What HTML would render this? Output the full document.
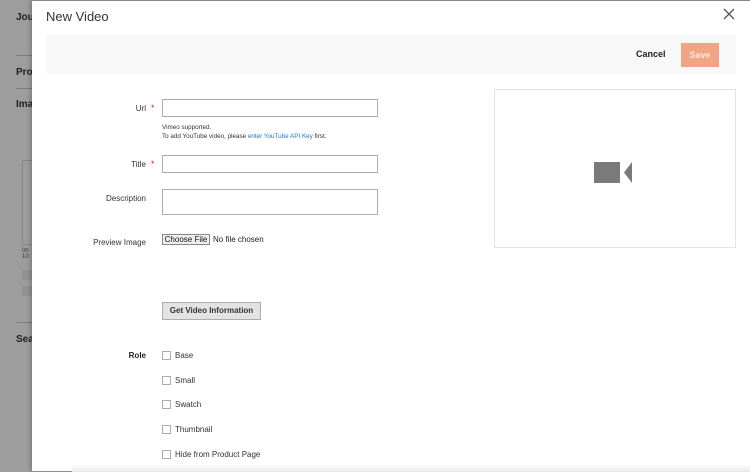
<!DOCTYPE html>
<html><head><meta charset="utf-8"><style>
*{box-sizing:border-box;margin:0;padding:0}
body{width:750px;height:471px;overflow:hidden;background:#9d9d9d;font-family:"Liberation Sans",sans-serif;position:relative;color:#303030}
.bg{position:absolute;font-weight:bold;font-size:10px;color:#222;left:16px}
.ln{position:absolute;left:16px;width:20px;height:1px;background:#7d7d7d}
.modal{position:absolute;left:32px;top:0;width:718px;height:471px;background:#fff;border-top:1px solid #888;box-shadow:-2px 0 4px rgba(0,0,0,.2)}
.abs{position:absolute}
.lbl{position:absolute;right:604px;font-size:8px;color:#333;text-align:right}
.star{position:absolute;left:119px;color:#e22626;font-size:9px}
.inp{position:absolute;left:130px;width:216px;border:1px solid #adadad;background:#fff}
.cb{position:absolute;left:130px;width:9px;height:9px;border:1px solid #adadad;background:#fff}
.cl{position:absolute;left:143px;font-size:8px;color:#333}
</style></head><body>
<div class="bg" style="top:12px">Jou</div>
<div class="ln" style="top:55px"></div>
<div class="bg" style="top:67px">Pro</div>
<div class="ln" style="top:88px"></div>
<div class="bg" style="top:99px">Ima</div>
<div class="abs" style="left:22px;top:160px;width:14px;height:85px;border:1px solid #888"></div>
<div class="abs" style="left:22px;top:248px;font-size:6px;color:#333">Im<br>10</div>
<div class="abs" style="left:22px;top:270px;width:14px;height:10px;background:#929292"></div>
<div class="abs" style="left:22px;top:286px;width:14px;height:10px;background:#929292"></div>
<div class="ln" style="top:322px"></div>
<div class="bg" style="top:334px">Sea</div>

<div class="modal">
 <div class="abs" style="left:14px;top:8px;font-size:13px;color:#333">New Video</div>
 <svg class="abs" style="left:691px;top:7px" width="12" height="12"><path d="M1 1L11 11M11 1L1 11" stroke="#555" stroke-width="1.3"/></svg>
 <div class="abs" style="left:14px;top:33px;width:690px;height:40px;background:#f8f8f8"></div>
 <div class="abs" style="left:604px;top:48px;font-size:9px;font-weight:bold;color:#222">Cancel</div>
 <div class="abs" style="left:649px;top:42px;width:38px;height:24px;background:#f2a584;color:#fde8de;font-size:9px;font-weight:bold;text-align:center;line-height:24px">Save</div>
 <div class="abs" style="left:462px;top:88px;width:242px;height:159px;border:1px solid #e3e3e3"></div>
 <svg class="abs" style="left:562px;top:161px" width="42" height="22"><rect x="0" y="0" width="26" height="21" fill="#7a7a7a"/><path d="M30 10.5L38 0V21Z" fill="#7a7a7a"/></svg>

 <div class="lbl" style="top:103px">Url</div><div class="star" style="top:102px">*</div>
 <div class="inp" style="top:98px;height:18px"></div>
 <div class="abs" style="left:130px;top:122px;font-size:6.3px;line-height:9px;color:#333">Vimeo supported.<br>To add YouTube video, please <span style="color:#1979c3">enter YouTube API Key</span> first.</div>
 <div class="lbl" style="top:159px">Title</div><div class="star" style="top:158px">*</div>
 <div class="inp" style="top:154px;height:18px"></div>
 <div class="lbl" style="top:193px">Description</div>
 <div class="inp" style="top:188px;height:26px"></div>
 <div class="lbl" style="top:237px">Preview Image</div>
 <div class="abs" style="left:130px;top:233px;width:48px;height:11px;border:1px solid #888;background:#efefef;font-size:8px;text-align:center;line-height:9px;color:#111">Choose File</div>
 <div class="abs" style="left:181px;top:234px;font-size:8px;color:#222">No file chosen</div>
 <div class="abs" style="left:130px;top:301px;width:99px;height:18px;border:1px solid #adadad;background:#e3e3e3;font-size:8px;font-weight:bold;text-align:center;line-height:16px;color:#333">Get Video Information</div>
 <div class="lbl" style="top:350px;font-weight:bold;color:#222">Role</div>
 <div class="cb" style="top:350px"></div><div class="cl" style="top:350px">Base</div>
 <div class="cb" style="top:375px"></div><div class="cl" style="top:375px">Small</div>
 <div class="cb" style="top:399px"></div><div class="cl" style="top:399px">Swatch</div>
 <div class="cb" style="top:424px"></div><div class="cl" style="top:424px">Thumbnail</div>
 <div class="cb" style="top:449px"></div><div class="cl" style="top:449px">Hide from Product Page</div>
 <div class="abs" style="left:40px;top:463px;width:678px;height:8px;background:linear-gradient(#fff0,#ececec)"></div>
</div>
</body></html>
